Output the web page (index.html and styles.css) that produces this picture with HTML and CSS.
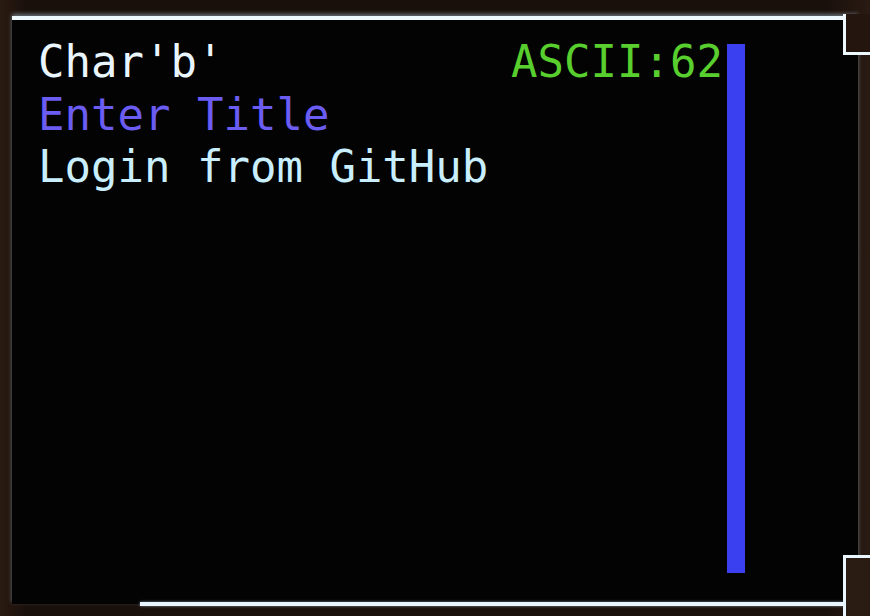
FILE: index.html
```html
<!DOCTYPE html>
<html>
<head>
<meta charset="utf-8">
<link rel="stylesheet" href="styles.css">
</head>
<body>
<div class="bezel">
  <div class="screen">
    <div class="text">
      <div class="row"><span class="white">Char'b'</span><span class="green">ASCII:62</span></div>
      <div class="line purple">Enter Title</div>
      <div class="line cyan">Login from GitHub</div>
    </div>
    <div class="bar"></div>
    <div class="notch-br"></div>
  </div>
</div>
</body>
</html>
```
FILE: styles.css
```css
html, body {
  margin: 0;
  padding: 0;
  background: #24160f;
  width: 870px;
  height: 616px;
  overflow: hidden;
}
.bezel {
  padding: 16px 0 0 12px;
  height: 600px;
  background: linear-gradient(90deg, #2a1a12 0%, #1a100b 3%, #1a100b 95%, #2a1b13 100%);
}
.screen {
  position: relative;
  width: 846px;
  height: 584px;
  background: #030303;
  border-top: 4px solid #eef8ff;
  box-shadow: 0 -2px 4px rgba(200, 230, 255, 0.45);
  display: flex;
  align-items: flex-start;
}
.screen::before {
  content: "";
  position: absolute;
  left: 831px;
  top: -6px;
  width: 30px;
  height: 38px;
  border-left: 3px solid #eef8ff;
  border-bottom: 3px solid #eef8ff;
  background: #24160f;
}
.screen::after {
  content: "";
  position: absolute;
  left: 128px;
  top: 582px;
  width: 704px;
  height: 4px;
  background: #eaf6ff;
  box-shadow: 0 0 3px rgba(200, 230, 255, 0.6);
}
.notch-br {
  position: absolute;
  left: 831px;
  top: 535px;
  width: 30px;
  height: 60px;
  border-left: 3px solid #eaf6ff;
  border-top: 3px solid #eaf6ff;
  background: #2a1b13;
}
.text {
  width: 685px;
  padding: 16px 0 0 26px;
  font-family: "DejaVu Sans Mono", monospace;
  font-size: 44px;
  line-height: 52.5px;
}
.row {
  display: flex;
  justify-content: space-between;
  white-space: pre;
}
.line { white-space: pre; }
.white { color: #eaf6ff; }
.green { color: #58cf2e; }
.purple { color: #6b5cf2; }
.cyan { color: #c9efff; }
.bar {
  margin: 24px 0 0 4px;
  width: 18px;
  height: 529px;
  background: #3a3ff0;
}
```
